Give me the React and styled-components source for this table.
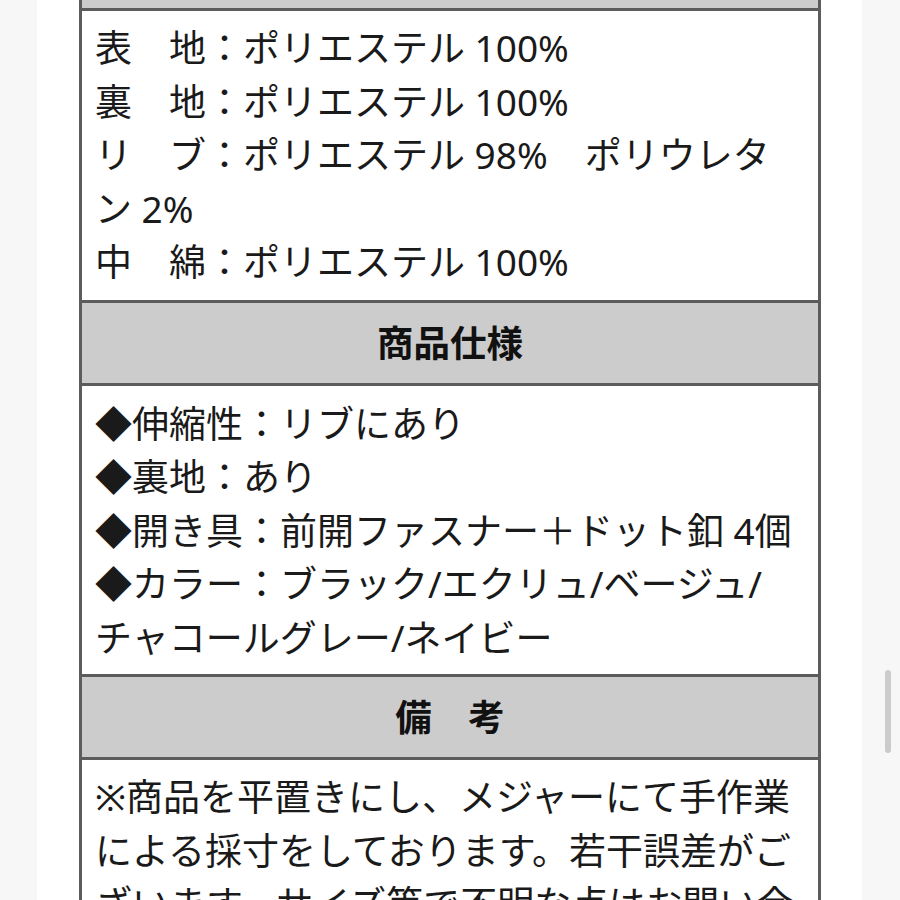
import React from "react";
import styled, { createGlobalStyle } from "styled-components";

const Global = createGlobalStyle`
  html, body {
    margin: 0;
    padding: 0;
    background: #ffffff;
    overflow: hidden;
  }
  body {
    font-family: "Noto Sans", "Noto Sans CJK JP", sans-serif;
    color: #1a1a1a;
  }
`;

const Page = styled.div`
  display: grid;
  grid-template-columns: 37px 1fr 38px;
  height: 900px;
  overflow: hidden;
  position: relative;
`;

const Gutter = styled.div`
  background: #f7f7f7;
`;

const Main = styled.main`
  padding: 0 41px 0 42px;
  overflow: hidden;
`;

const Table = styled.div`
  margin-top: -75px;
  border: 3px solid #5c5c5c;
  border-bottom: none;
`;

const HeadRow = styled.div`
  background: #cccccc;
  border-bottom: 3px solid #5c5c5c;
  padding: 13px 12px;
  text-align: center;
  font-size: 36.5px;
  line-height: 54px;
  font-weight: 700;
  color: #111;
`;

const BodyRow = styled.div`
  background: #ffffff;
  border-bottom: 3px solid #5c5c5c;
  padding: ${(p) => p.$pt}px 22px ${(p) => p.$pb}px 13px;
  font-size: 37px;
  line-height: 53.5px;
  color: #1a1a1a;
`;

const Line = styled.div``;

const Scrollbar = styled.div`
  position: absolute;
  right: 9px;
  top: 670px;
  width: 6px;
  height: 83px;
  border-radius: 3px;
  background: #cbcbcb;
`;

export default function App() {
  return (
    <>
      <Global />
      <Page>
        <Gutter />
        <Main>
          <Table>
            <HeadRow>素　材</HeadRow>
            <BodyRow $pt={10} $pb={11}>
              <Line>表　地：ポリエステル 100%</Line>
              <Line>裏　地：ポリエステル 100%</Line>
              <Line>リ　ブ：ポリエステル 98%　ポリウレタン 2%</Line>
              <Line>中　綿：ポリエステル 100%</Line>
            </BodyRow>
            <HeadRow>商品仕様</HeadRow>
            <BodyRow $pt={11} $pb={10}>
              <Line>◆伸縮性：リブにあり</Line>
              <Line>◆裏地：あり</Line>
              <Line>◆開き具：前開ファスナー＋ドット釦 4個</Line>
              <Line>◆カラー：ブラック/エクリュ/ベージュ/チャコールグレー/ネイビー</Line>
            </BodyRow>
            <HeadRow>備　考</HeadRow>
            <BodyRow $pt={10} $pb={10}>
              <Line>
                ※商品を平置きにし、メジャーにて手作業による採寸をしております。若干誤差がございます。サイズ等で不明な点はお問い合わせください。
              </Line>
            </BodyRow>
          </Table>
        </Main>
        <Gutter />
        <Scrollbar />
      </Page>
    </>
  );
}
